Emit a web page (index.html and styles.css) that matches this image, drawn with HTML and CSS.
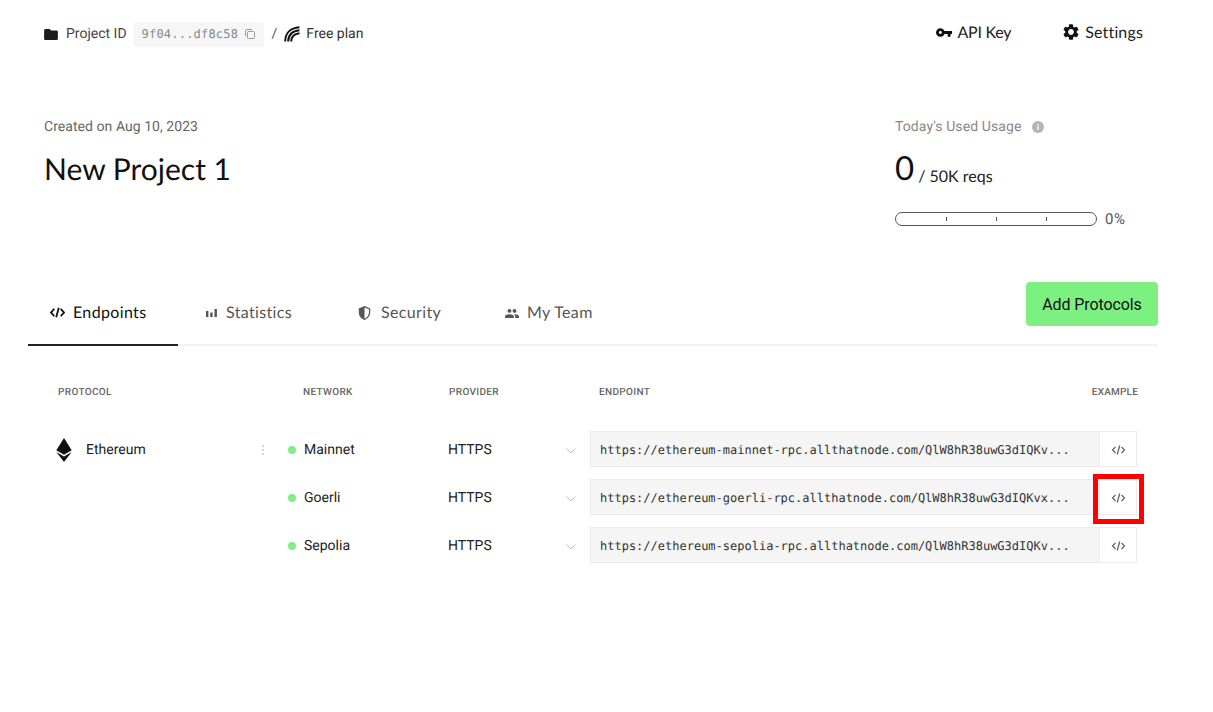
FILE: index.html
```html
<!DOCTYPE html>
<html lang="en">
<head>
<meta charset="utf-8">
<title>New Project 1</title>
<link rel="stylesheet" href="styles.css">
</head>
<body>
<header class="topbar">
  <div class="crumbs">
    <svg class="ico-folder" viewBox="2 4 20 16"><path d="M10 4H4c-1.1 0-2 .9-2 2v12c0 1.1.9 2 2 2h16c1.1 0 2-.9 2-2V8c0-1.100-.9-2-2-2h-8l-2-2z"/></svg>
    <span class="crumb-label">Project ID</span>
    <span class="id-chip"><span class="id-text">9f04...df8c58</span>
      <svg class="ico-copy" viewBox="0 0 12 12"><path d="M4.500 3.500h5a1 1 0 0 1 1 1v5a1 1 0 0 1-1 1h-5a1 1 0 0 1-1-1v-5a1 1 0 0 1 1-1zM1.500 8V2.500a1 1 0 0 1 1-1H8"/></svg>
    </span>
    <span class="slash">/</span>
    <svg class="ico-plan" viewBox="0 0 16 16"><path d="M1.200 15.500C1.200 7.500 6 1.800 15.500 1.200M4.200 15.500C4.200 9.500 8 5 15.500 4.200M7.200 15.500C7.200 11 10 8 15.500 7.200"/></svg>
    <span class="crumb-label plan">Free plan</span>
  </div>
  <nav class="actions">
    <a class="action action-key"><svg class="ico-key" viewBox="1 6 22 12"><path fill-rule="evenodd" d="M12.650 10C11.830 7.670 9.610 6 7 6c-3.310 0-6 2.690-6 6s2.690 6 6 6c2.610 0 4.830-1.670 5.650-4H17v4h4v-4h2v-4H12.650zM7 14c-1.100 0-2-.9-2-2s.9-2 2-2 2 .9 2 2-.9 2-2 2z"/></svg>API Key</a>
    <a class="action action-settings"><svg class="ico-gear" viewBox="2 2 20 20"><path d="M19.140 12.940c.04-.3.06-.61.06-.94 0-.32-.02-.64-.07-.94l2.030-1.580a.49.49 0 0 0 .12-.61l-1.920-3.320a.488.488 0 0 0-.59-.22l-2.390.96c-.5-.38-1.030-.7-1.620-.94l-.36-2.540a.484.484 0 0 0-.48-.41h-3.840c-.24 0-.43.17-.47.41l-.36 2.540c-.59.24-1.130.57-1.620.94l-2.390-.96c-.22-.08-.47 0-.59.22L2.740 8.870c-.12.21-.08.47.12.61l2.030 1.580c-.05.3-.09.63-.09.94s.02.64.07.94l-2.030 1.580a.49.49 0 0 0-.12.61l1.920 3.320c.12.22.37.29.59.22l2.390-.96c.5.38 1.030.7 1.620.94l.36 2.540c.05.24.24.41.48.41h3.840c.24 0 .44-.17.47-.41l.36-2.540c.59-.24 1.130-.56 1.620-.94l2.390.96c.22.08.47 0 .59-.22l1.920-3.320c.12-.22.07-.47-.12-.61l-2.010-1.580zM12 15.600c-1.980 0-3.600-1.620-3.600-3.600s1.620-3.600 3.600-3.600 3.600 1.620 3.600 3.600-1.620 3.600-3.600 3.600z"/></svg>Settings</a>
  </nav>
</header>

<section class="summary">
  <div class="project">
    <p class="created">Created on Aug 10, 2023</p>
    <h1 class="title">New Project 1</h1>
  </div>
  <div class="usage">
    <p class="usage-label">Today's Used Usage
      <svg class="ico-info" viewBox="0 0 12 12"><circle cx="6" cy="6" r="6"/><rect class="info-mark" x="5.300" y="5.200" width="1.400" height="3.800"/><rect class="info-mark" x="5.300" y="3" width="1.400" height="1.400"/></svg>
    </p>
    <p class="usage-count"><span class="count">0</span><span class="limit">/ 50K reqs</span></p>
    <div class="meter-row">
      <div class="meter"><i></i><i></i><i></i></div>
      <span class="percent">0%</span>
    </div>
  </div>
</section>

<section class="tabs-wrap">
  <nav class="tabs">
    <a class="tab active"><svg class="ico-code" viewBox="0 0 14 10"><path d="M4 1.500L1 5l3 3.500M10 1.500L13 5l-3 3.500M8.200 .5L5.800 9.500"/></svg>Endpoints</a>
    <a class="tab"><svg class="ico-bars" viewBox="0 0 11 8"><rect x="0" y="2" width="2.400" height="6"/><rect x="4.200" y="3.500" width="2.400" height="4.500"/><rect x="8.500" y="0" width="2.400" height="8"/></svg>Statistics</a>
    <a class="tab"><svg class="ico-shield" viewBox="3 1 18 22"><path fill-rule="evenodd" d="M12 1L3 5v6c0 5.550 3.840 10.740 9 12 5.160-1.260 9-6.450 9-12V5l-9-4zm0 2.200l7 3.100V11c0 4.500-3 8.700-7 9.900V3.200z"/></svg>Security</a>
    <a class="tab"><svg class="ico-team" viewBox="1 5 22 14"><path d="M16 11c1.660 0 2.990-1.340 2.990-3S17.660 5 16 5c-1.660 0-3 1.340-3 3s1.340 3 3 3zm-8 0c1.660 0 2.990-1.340 2.990-3S9.660 5 8 5C6.340 5 5 6.340 5 8s1.340 3 3 3zm0 2c-2.330 0-7 1.170-7 3.500V19h14v-2.500c0-2.330-4.670-3.500-7-3.500zm8 0c-.29 0-.62.02-.97.05 1.160.84 1.970 1.970 1.970 3.450V19h6v-2.500c0-2.330-4.670-3.500-7-3.500z"/></svg>My Team</a>
  </nav>
  <button class="add-btn">Add Protocols</button>
</section>

<section class="table">
  <div class="th th-protocol">PROTOCOL</div>
  <div class="th th-network">NETWORK</div>
  <div class="th th-provider">PROVIDER</div>
  <div class="th th-endpoint">ENDPOINT</div>
  <div class="th th-example">EXAMPLE</div>

  <div class="protocol">
    <svg class="ico-eth" viewBox="0 0 16 24"><path d="M8 0L.3 12.200 8 16.700l7.700-4.500L8 0z"/><path d="M.3 13.900L8 24l7.700-10.100L8 18.400.3 13.900z"/></svg>
    <span class="protocol-name">Ethereum</span>
    <span class="kebab"><i></i><i></i><i></i></span>
  </div>

  <div class="network"><i class="dot"></i>Mainnet</div>
  <div class="provider">HTTPS<svg class="chevron" viewBox="0 0 10 6"><path d="M.5 .5L5 5 9.500 .5"/></svg></div>
  <div class="endpoint">https://ethereum-mainnet-rpc.allthatnode.com/QlW8hR38uwG3dIQKv...</div>
  <button class="example"><svg class="ico-example" viewBox="0 0 14 10"><path d="M4 2L1 5l3 3M10 2l3 3-3 3M8.200 .5L5.800 9.500"/></svg></button>

  <div class="network"><i class="dot"></i>Goerli</div>
  <div class="provider">HTTPS<svg class="chevron" viewBox="0 0 10 6"><path d="M.5 .5L5 5 9.500 .5"/></svg></div>
  <div class="endpoint">https://ethereum-goerli-rpc.allthatnode.com/QlW8hR38uwG3dIQKvx...</div>
  <button class="example highlighted"><svg class="ico-example" viewBox="0 0 14 10"><path d="M4 2L1 5l3 3M10 2l3 3-3 3M8.200 .5L5.800 9.500"/></svg></button>

  <div class="network"><i class="dot"></i>Sepolia</div>
  <div class="provider">HTTPS<svg class="chevron" viewBox="0 0 10 6"><path d="M.5 .5L5 5 9.500 .5"/></svg></div>
  <div class="endpoint">https://ethereum-sepolia-rpc.allthatnode.com/QlW8hR38uwG3dIQKv...</div>
  <button class="example"><svg class="ico-example" viewBox="0 0 14 10"><path d="M4 2L1 5l3 3M10 2l3 3-3 3M8.200 .5L5.800 9.500"/></svg></button>
</section>
</body>
</html>
```

FILE: styles.css
```css
*, *::before, *::after { box-sizing: border-box; }
html, body { margin: 0; padding: 0; }
body {
  width: 1213px;
  height: 712px;
  overflow: hidden;
  background: #fff;
  color: #111;
  font-family: Roboto, "Liberation Sans", sans-serif;
  font-size: 14px;
  text-rendering: geometricPrecision;
}
p, h1 { margin: 0; }

.topbar {
  height: 66px;
  padding: 0 70px 0 44px;
  display: flex;
  justify-content: space-between;
  align-items: center;
}
.crumbs { display: flex; align-items: center; margin-top: 2px; }
.ico-folder { width: 14px; height: 11px; fill: #1a1a1a; margin-right: 8px; }
.crumb-label { font-size: 14px; color: #444; }
.id-chip {
  height: 25px;
  margin-left: 7px;
  padding: 0 8px;
  width: 130px;
  background: #f6f6f6;
  border-radius: 2px;
  display: flex;
  align-items: center;
  justify-content: space-between;
}
.id-text { font-family: "DejaVu Sans Mono", "Liberation Mono", monospace; font-size: 12px; letter-spacing: .2px; color: #888; }
.ico-copy { width: 12px; height: 12px; fill: none; stroke: #999; stroke-width: 1; }
.slash { margin: 0 7px 0 8px; color: #555; font-size: 14px; }
.ico-plan { width: 16px; height: 16px; fill: none; stroke: #111; stroke-width: 2; margin-right: 6px; }
.plan { color: #333; }

.actions { display: flex; gap: 52px; margin-top: -2px; }
.action {
  display: flex;
  align-items: center;
  font-family: Lato, sans-serif;
  font-size: 16px;
  color: #222;
}
.action-key { letter-spacing: -.25px; }
.action-settings { letter-spacing: .15px; }
.ico-key { width: 16px; height: 9px; fill: #111; margin-right: 6px; }
.ico-gear { width: 16px; height: 16px; fill: #111; margin-right: 6px; }

.summary {
  padding: 0 87px 0 44px;
  height: 216px;
  display: flex;
  justify-content: space-between;
}
.created { margin-top: 53px; color: #666; font-size: 14px; letter-spacing: .05px; line-height: 16px; }
.title {
  margin-top: 14px;
  font-family: Lato, sans-serif;
  font-weight: 400;
  font-size: 30px;
  line-height: 40px;
  color: #111;
}
.usage { width: 231px; }
.usage-label {
  margin-top: 53px;
  display: flex;
  align-items: center;
  font-size: 14px;
  letter-spacing: .1px;
  line-height: 16px;
  color: #888;
}
.ico-info { width: 12px; height: 12px; fill: #b5b5b5; margin-left: 10px; }
.info-mark { fill: #fff; }
.usage-count {
  margin-top: 13px;
  height: 40px;
  display: flex;
  align-items: flex-end;
  font-family: Lato, sans-serif;
}
.count { font-size: 33px; line-height: 40px; color: #111; }
.limit { margin: 0 0 1px 4px; font-size: 16px; line-height: 20px; color: #222; }
.meter-row { margin-top: 22px; display: flex; align-items: center; }
.meter {
  width: 202px;
  height: 14px;
  border: 1px solid #555;
  border-radius: 7px;
  display: flex;
  justify-content: space-around;
  align-items: center;
  padding: 0 25px;
}
.meter i { width: 1px; height: 4px; background: #555; }
.percent { margin-left: 8px; font-size: 15px; letter-spacing: .5px; color: #555; }

.tabs-wrap {
  margin: 0 55px 0 28px;
  height: 64px;
  border-bottom: 2px solid #f2f2f2;
  display: flex;
  justify-content: space-between;
  align-items: flex-start;
}
.tabs { display: flex; align-self: flex-end; margin-bottom: -2px; }
.tab {
  height: 44px;
  display: flex;
  align-items: flex-start;
  font-family: Lato, sans-serif;
  font-size: 16px;
  letter-spacing: .35px;
  color: #555;
  padding: 1px 0 0;
  line-height: 20px;
}
.tab svg { margin-top: 4px; }
.tab:nth-child(1) { width: 150px; padding-left: 22px; }
.tab:nth-child(2) { width: 180px; padding-left: 28px; }
.tab:nth-child(3) { width: 147px; }
.tab.active { color: #111; border-bottom: 2px solid #222; }
.ico-code { width: 15px; height: 11px; fill: none; stroke: #111; stroke-width: 1.700; margin-right: 8px; }
.ico-bars { width: 11px; height: 8px; fill: #555; margin-right: 9px; margin-top: 6px !important; }
.ico-shield { width: 13px; height: 14px; fill: #555; margin-right: 10px; margin-top: 3px !important; }
.ico-team { width: 14px; height: 9px; fill: #555; margin-right: 8px; margin-top: 6px !important; }
.add-btn {
  width: 132px;
  height: 44px;
  border: 0;
  border-radius: 4px;
  background: #7df082;
  color: #111;
  font-family: Roboto, sans-serif;
  font-size: 16px;
  letter-spacing: -.1px;
  padding: 0;
}

.table {
  padding-left: 56px;
  margin-top: 37px;
  display: grid;
  grid-template-columns: 232px 160px 142px 510px 37px;
  grid-template-rows: 36px 36px 36px 36px;
  row-gap: 12px;
}
.th {
  padding-top: 3px;
  font-size: 10px;
  font-weight: 500;
  line-height: 14px;
  color: #666;
  letter-spacing: .35px;
}
.th-protocol { padding-left: 2px; }
.th-network { padding-left: 15px; }
.th-provider { padding-left: 1px; }
.th-endpoint { padding-left: 9px; }
.th-example { justify-self: end; margin-right: -1px; white-space: nowrap; letter-spacing: .2px; }
.protocol {
  grid-row: 2 / span 3;
  height: 36px;
  padding: 1px 24px 0 0;
  display: flex;
  align-items: center;
}
.ico-eth { width: 16px; height: 24px; fill: #111; margin-right: 14px; }
.protocol-name { font-size: 14px; color: #222; }
.kebab { margin-left: auto; display: flex; flex-direction: column; gap: 2px; }
.kebab i { width: 2px; height: 2px; background: #c4c4c4; border-radius: 50%; }
.network { display: flex; align-items: center; padding-top: 1px; font-size: 14px; color: #222; }
.dot { width: 8px; height: 8px; border-radius: 50%; background: #7df082; margin-right: 8px; }
.provider { display: flex; align-items: center; justify-content: space-between; padding: 1px 14px 0 0; font-size: 14px; color: #222; }
.chevron { width: 10px; height: 6px; fill: none; stroke: #bbb; stroke-width: 1; margin-top: 3px; }
.endpoint {
  background: #f5f5f5;
  border: 1px solid #ececec;
  padding: 1px 0 0 9px;
  display: flex;
  align-items: center;
  font-family: "DejaVu Sans Mono", "Liberation Mono", monospace;
  font-size: 12px;
  color: #333;
  white-space: nowrap;
  overflow: hidden;
}
.example {
  position: relative;
  padding: 1px 0 0;
  background: #fff;
  border: 1px solid #ececec;
  border-left-width: 0;
  display: flex;
  align-items: center;
  justify-content: center;
}
.ico-example { width: 15px; height: 10px; fill: none; stroke: #666; stroke-width: 1.300; }
.highlighted { z-index: 1; overflow: visible; }
.highlighted::after {
  content: "";
  position: absolute;
  left: -7px;
  top: -6px;
  width: 51px;
  height: 50px;
  border: 5px solid #f00;
}
```
